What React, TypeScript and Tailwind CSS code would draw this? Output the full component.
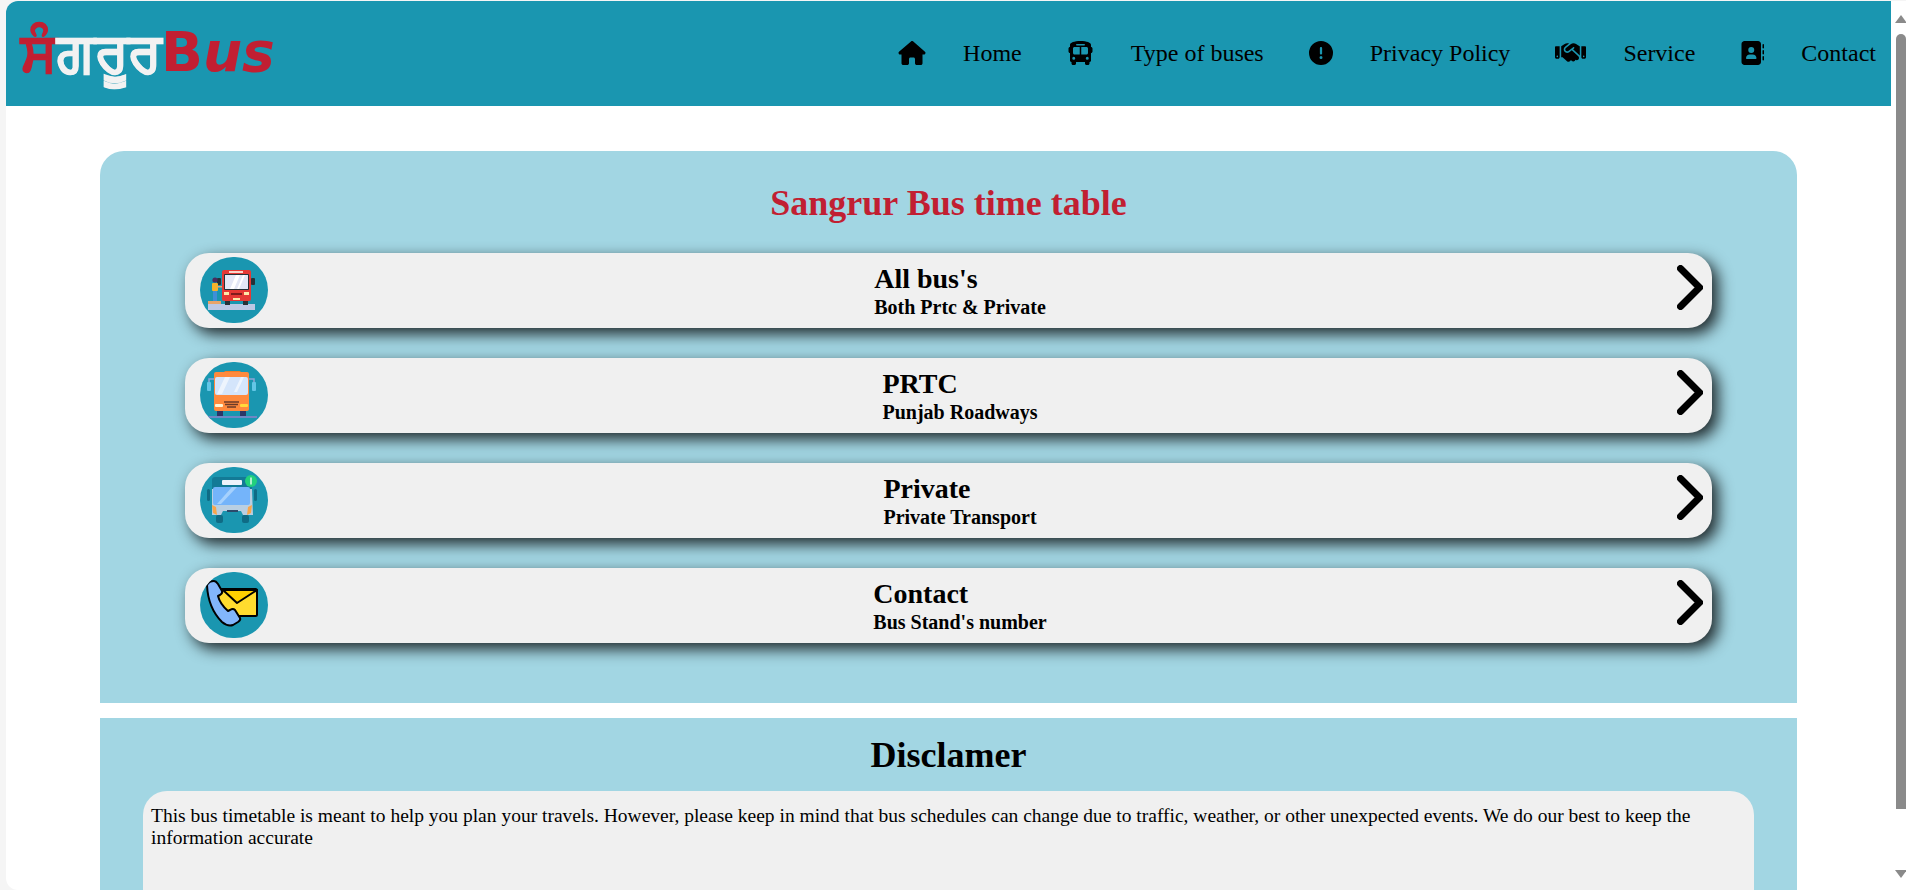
import { FaHouse, FaBus, FaCircleExclamation, FaHandshake, FaAddressBook } from "react-icons/fa6"
import type { ReactNode } from "react"

const navLinks = [
  { label: "Home", icon: <FaHouse className="h-[24px] w-[28px]" /> },
  { label: "Type of buses", icon: <FaBus className="h-[24px] w-[27px]" /> },
  { label: "Privacy Policy", icon: <FaCircleExclamation className="h-[24px] w-[24px]" /> },
  { label: "Service", icon: <FaHandshake className="h-[25px] w-[31px]" /> },
  { label: "Contact", icon: <FaAddressBook className="h-[24px] w-[24px]" /> },
]

const RedBus = () => (
  <svg viewBox="0 0 68 66" className="h-full w-full">
    <rect x="8" y="47" width="47" height="6" fill="#bcc8e4" />
    <rect x="8" y="44" width="13" height="3" fill="#e8a468" />
    <rect x="17" y="21" width="4" height="7" rx="1" fill="#263238" />
    <rect x="51" y="21" width="4" height="7" rx="1" fill="#263238" />
    <rect x="25" y="43" width="5" height="5" fill="#263238" />
    <rect x="43" y="43" width="5" height="5" fill="#263238" />
    <rect x="22" y="13" width="29" height="31" rx="2" fill="#e53935" />
    <rect x="29" y="14" width="14" height="2" fill="#fbd5c8" />
    <rect x="24" y="17" width="25" height="16" rx="1" fill="#263238" />
    <rect x="25" y="18" width="23" height="14" fill="#e3e7f5" />
    <path d="M30 32l6-14h4l-6 14zM37 32l6-14h2l-6 14z" fill="#fff" />
    <rect x="24" y="35" width="5" height="3" fill="#ffe9a8" />
    <rect x="44" y="35" width="5" height="3" fill="#ffe9a8" />
    <rect x="31" y="36" width="11" height="2" fill="#7f1d1d" />
    <rect x="33" y="41" width="7" height="2" fill="#ffe9a8" />
    <circle cx="15" cy="23" r="2.6" fill="#4a2a5e" />
    <rect x="12" y="26" width="6" height="8" rx="1" fill="#f6b32b" />
    <rect x="13" y="34" width="4" height="10" fill="#3f8fd8" />
    <rect x="17" y="29" width="5" height="1.5" fill="#e8a468" />
  </svg>
)

const OrangeBus = () => (
  <svg viewBox="0 0 68 66" className="h-full w-full">
    <rect x="5" y="54" width="52" height="2" fill="#6f86c4" />
    <path d="M9 20v-3h5M54 20v-3h-5" fill="none" stroke="#8fa4d6" strokeWidth="1.5" />
    <rect x="7" y="20" width="4" height="9" rx="1" fill="#62c6e6" />
    <rect x="52" y="20" width="4" height="9" rx="1" fill="#62c6e6" />
    <rect x="17" y="49" width="6" height="5" fill="#2c3566" />
    <rect x="40" y="49" width="6" height="5" fill="#2c3566" />
    <rect x="24" y="9" width="17" height="3" rx="1.5" fill="#f27d26" />
    <rect x="14" y="10" width="35" height="39" rx="2" fill="#ff8a3d" />
    <rect x="15" y="15" width="33" height="18" rx="2" fill="#d4e5fb" />
    <path d="M17 32l8-17h5l-8 17zM34 30l7-15h3l-7 15z" fill="#edf4fd" />
    <rect x="15" y="42" width="8" height="3" rx="1" fill="#fff4d1" />
    <rect x="40" y="42" width="8" height="3" rx="1" fill="#ffd93b" />
    <path d="M24 40h15M25 42.5h13M27 45h9" stroke="#6b3a28" strokeWidth="1.3" />
  </svg>
)

const BlueBus = () => (
  <svg viewBox="0 0 68 66" className="h-full w-full">
    <rect x="12" y="10" width="40" height="20" rx="3" fill="#137a96" />
    <rect x="7" y="22" width="3" height="12" rx="1.5" fill="#0f6b85" />
    <rect x="54" y="22" width="3" height="12" rx="1.5" fill="#0f6b85" />
    <rect x="16" y="48" width="7" height="8" rx="2" fill="#0f6b85" />
    <rect x="42" y="48" width="7" height="8" rx="2" fill="#0f6b85" />
    <rect x="22" y="13" width="20" height="5" rx="1" fill="#eef3fb" />
    <path d="M12 22h40l1 26h-10l-2-4H23l-2 4H12z" fill="#b9cfe2" />
    <rect x="13" y="20" width="37" height="18" rx="2" fill="#74b4fa" />
    <path d="M17 37l15-17h5L21 37z" fill="#a6d1fd" />
    <path d="M12 38l4 2 1 8-4-2z" fill="#f9a64a" />
    <path d="M52 38l-4 2-1 8 4-2z" fill="#f9a64a" />
    <rect x="27" y="43" width="11" height="2" fill="#2c4a6b" />
    <circle cx="51" cy="14" r="6" fill="#22d07d" />
    <path d="M51 10.5v7" stroke="#eafff3" strokeWidth="1.4" />
  </svg>
)

const ContactIcon = () => (
  <svg viewBox="0 0 68 66" className="h-full w-full">
    <rect x="18" y="17" width="39" height="27" rx="1.5" fill="#ffdc2e" stroke="#000" strokeWidth="2" />
    <path d="M23 18h34L37 31z" fill="#ffd000" stroke="#000" strokeWidth="2" strokeLinejoin="round" />
    <path d="M7 13Q9 9 14 9Q16 9 18 12L22 19Q23 21 20 23L18 24Q20 32 28 39L30 38Q33 36 35 38L40 46Q41 48 38 50L33 53Q28 55 22 50Q8 36 7 13z" fill="#82b5fb" stroke="#000" strokeWidth="2" strokeLinejoin="round" />
  </svg>
)

const Row = ({ icon, title, sub }: { icon: ReactNode; title: string; sub: string }) => (
  <div className="flex h-[75px] items-center rounded-[24px] bg-[#f0f0f0] pl-[15px] shadow-[6px_6px_15px_#000000d0]">
    <div className="mb-px h-[66px] w-[68px] shrink-0 overflow-hidden rounded-full bg-[#1a96b0]">{icon}</div>
    <div className="flex flex-1 justify-center">
      <div className="text-black">
        <div className="text-[28px] leading-[30px] font-bold">{title}</div>
        <div className="mt-[2px] text-[20px] leading-[22px] font-bold">{sub}</div>
      </div>
    </div>
    <div className="w-[60px] shrink-0 pb-[7px] pl-[25px]">
      <svg width="26" height="45" viewBox="0 0 26 45" fill="none">
        <path d="M3.5 3.5l19 19-19 19" stroke="#000" strokeWidth="7" strokeLinecap="round" strokeLinejoin="miter" />
      </svg>
    </div>
  </div>
)

const App = () => {
  return (
    <div className="flex h-screen overflow-hidden bg-[#f5f5f5] pt-px pl-[6px] font-['Liberation_Serif',serif] text-black">
      <div className="flex-1 overflow-hidden rounded-tl-[12px] rounded-bl-[12px] bg-white">
        <header className="flex h-[105px] items-center justify-between bg-[#1a96b0] pr-[15px] pl-[15px]">
          <div className="flex h-full items-center pb-[2px] font-['DejaVu_Sans','Noto_Sans',sans-serif] text-[55px] leading-none font-bold">
            <span className="text-[54px] text-[#c11f32] [-webkit-text-stroke:1px_#c11f32]">ਸੰ</span>
            <span className="text-[54px] text-[#f2f2f2] [-webkit-text-stroke:1px_#f2f2f2]">ਗਰੂਰ</span>
            <span className="text-[#c11f32]">B</span>
            <span className="text-[#c11f32] italic">us</span>
          </div>
          <nav className="flex items-center gap-[45px] pb-[2px] text-[24px]">
            {navLinks.map((link) => (
              <a key={link.label} className="flex items-center gap-[37px]">
                {link.icon}
                {link.label}
              </a>
            ))}
          </nav>
        </header>

        <main className="px-[94px] pt-[45px]">
          <section className="rounded-t-[24px] bg-[#a2d6e3] px-[85px] pt-[30px] pb-[60px]">
            <h1 className="mb-[28px] text-center text-[36px] leading-[44px] font-bold text-[#c11f32]">Sangrur Bus time table</h1>
            <div className="flex flex-col gap-[30px]">
              <Row icon={<RedBus />} title="All bus's" sub="Both Prtc & Private" />
              <Row icon={<OrangeBus />} title="PRTC" sub="Punjab Roadways" />
              <Row icon={<BlueBus />} title="Private" sub="Private Transport" />
              <Row icon={<ContactIcon />} title="Contact" sub="Bus Stand's number" />
            </div>
          </section>

          <section className="mt-[15px] h-[300px] bg-[#a2d6e3] px-[43px] pt-[15px]">
            <h2 className="mb-[14px] text-center text-[36px] leading-[44px] font-bold">Disclamer</h2>
            <div className="h-[200px] rounded-t-[24px] bg-[#f0f0f0] px-[8px] pt-[14px] text-[19.5px] leading-[22px]">
              This bus timetable is meant to help you plan your travels. However, please keep in mind that bus schedules can change due to traffic, weather, or other unexpected events. We do our best to keep the information accurate
            </div>
          </section>
        </main>
      </div>

      {/* window scrollbar */}
      <div className="flex w-[15px] shrink-0 flex-col items-center bg-white pt-[14px] pb-[12px] pl-[5px]">
        <div className="h-0 w-0 border-x-[6px] border-b-[8px] border-x-transparent border-b-[#8a8a8a]" />
        <div className="mt-[11px] h-[775px] w-[10px] rounded-t-[5px] bg-[#8a8a8a]" />
        <div className="mt-auto h-0 w-0 border-x-[6px] border-t-[8px] border-x-transparent border-t-[#8a8a8a]" />
      </div>
    </div>
  )
}

export default App
